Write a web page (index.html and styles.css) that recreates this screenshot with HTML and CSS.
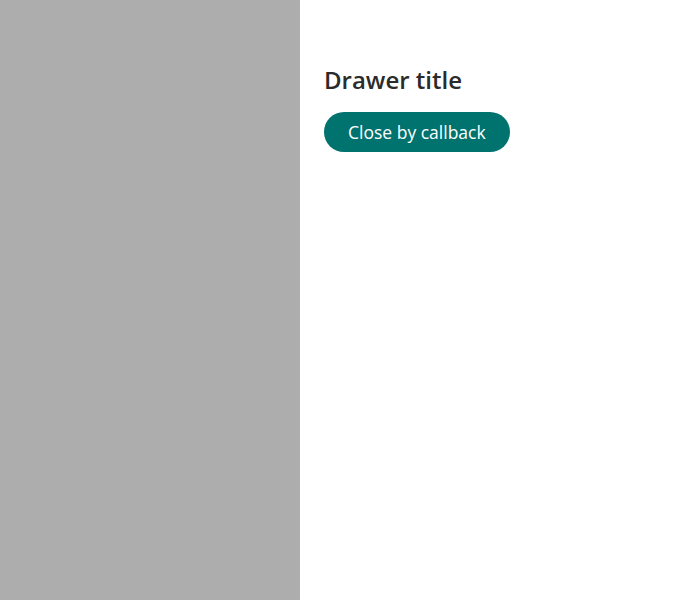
FILE: index.html
```html
<!DOCTYPE html>
<html>
<head>
<meta charset="utf-8">
<link rel="stylesheet" href="styles.css">
</head>
<body>
<div class="layout">
  <div class="overlay"></div>
  <aside class="drawer">
    <h2 class="drawer-title">Drawer title</h2>
    <button class="btn-primary">Close by callback</button>
  </aside>
</div>
</body>
</html>
```
FILE: styles.css
```css
html, body {
  margin: 0;
  padding: 0;
  height: 100%;
}
body {
  font-family: "Open Sans", "Noto Sans", sans-serif;
  color: #2b2b2b;
}
.layout {
  display: flex;
  height: 600px;
}
.overlay {
  flex: 0 0 300px;
  background: #adadad;
}
.drawer {
  flex: 1;
  background: #ffffff;
  padding: 64px 24px 24px;
  display: flex;
  flex-direction: column;
  align-items: flex-start;
  gap: 16px;
}
.drawer-title {
  margin: 0;
  font-size: 24px;
  line-height: 32px;
  font-weight: 600;
  color: #2b2b2b;
}
.btn-primary {
  height: 40px;
  padding: 0 24px;
  border: none;
  border-radius: 20px;
  background: #00736f;
  color: #ffffff;
  font-family: "Open Sans", "Noto Sans", sans-serif;
  font-size: 17.5px;
  cursor: pointer;
}
```
